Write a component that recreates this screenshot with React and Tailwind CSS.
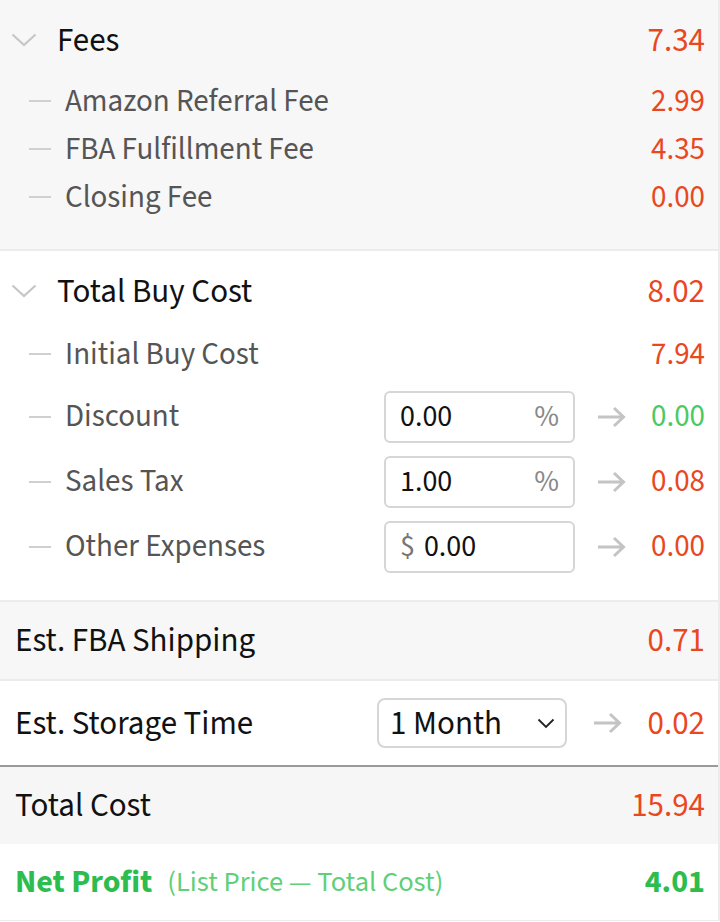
import React from 'react';

const RED = 'text-[#e9481f]';

function Chevron() {
  return (
    <svg width="26" height="14" viewBox="0 0 26 14" className="shrink-0">
      <polyline points="1.5,1.5 13,12 24.5,1.5" fill="none" stroke="#c6c6c6" strokeWidth="2.2" />
    </svg>
  );
}

function Arrow() {
  return (
    <svg width="29" height="22" viewBox="0 0 29 22" className="shrink-0">
      <path d="M1 11 H26 M17 2 L26.5 11 L17 20" fill="none" stroke="#c4c4c4" strokeWidth="3" />
    </svg>
  );
}

function Dash() {
  return <div className="w-[22px] h-[2px] bg-[#d0d0d0] shrink-0" />;
}

function SubRow({ label, value }) {
  return (
    <div className="flex items-center h-[48px] pl-[29px] pr-[13px] text-[31px]">
      <Dash />
      <span className="ml-[14px] flex-1 text-[#555]">{label}</span>
      <span className={RED}>{value}</span>
    </div>
  );
}

function Header({ label, value }) {
  return (
    <div className="flex items-center h-[56px] pl-[11px] pr-[13px] text-[33px]">
      <Chevron />
      <span className="ml-[20px] flex-1 text-[#111]">{label}</span>
      <span className={RED}>{value}</span>
    </div>
  );
}

function InputRow({ label, children, value, valueColor }) {
  return (
    <div className="flex items-center h-[65px] pl-[29px] pr-[13px] text-[31px]">
      <Dash />
      <span className="ml-[14px] flex-1 text-[#555]">{label}</span>
      <div className="w-[191px] h-[52px] border-2 border-[#d6d6d6] rounded-[6px] bg-white flex items-center px-[14px] text-[30px]">
        {children}
      </div>
      <div className="ml-[22px]"><Arrow /></div>
      <span className={`w-[79px] text-right ${valueColor}`}>{value}</span>
    </div>
  );
}

export default function App() {
  return (
    <div
      className="w-[720px] bg-white border-r-2 border-[#ececec] leading-none"
      style={{ fontFamily: '"Source Sans 3", "Source Sans Pro", Lato, sans-serif' }}
    >
      {/* Fees */}
      <div className="bg-[#f7f7f7] pt-[12px] pb-[28px] border-b-2 border-[#ececec]">
        <Header label="Fees" value="7.34" />
        <div className="mt-[9px]">
          <SubRow label="Amazon Referral Fee" value="2.99" />
          <SubRow label="FBA Fulfillment Fee" value="4.35" />
          <SubRow label="Closing Fee" value="0.00" />
        </div>
      </div>

      {/* Total Buy Cost */}
      <div className="bg-white pt-[12px] pb-[21px] border-b-2 border-[#ececec]">
        <Header label="Total Buy Cost" value="8.02" />
        <div className="mt-[11px]">
          <SubRow label="Initial Buy Cost" value="7.94" />
        </div>
        <div className="mt-[6px]">
          <InputRow label="Discount" value="0.00" valueColor="text-[#4cc965]">
            <span className="flex-1 text-[#111]">0.00</span>
            <span className="text-[#888]">%</span>
          </InputRow>
          <InputRow label="Sales Tax" value="0.08" valueColor={RED}>
            <span className="flex-1 text-[#111]">1.00</span>
            <span className="text-[#888]">%</span>
          </InputRow>
          <InputRow label="Other Expenses" value="0.00" valueColor={RED}>
            <span className="text-[#777] mr-[9px]">$</span>
            <span className="flex-1 text-[#111]">0.00</span>
          </InputRow>
        </div>
      </div>

      {/* Est. FBA Shipping */}
      <div className="bg-[#f7f7f7] h-[79px] flex items-center pl-[15px] pr-[13px] border-b-2 border-[#ececec] text-[33px]">
        <span className="flex-1 text-[#111]">Est. FBA Shipping</span>
        <span className={RED}>0.71</span>
      </div>

      {/* Est. Storage Time */}
      <div className="bg-white h-[86px] flex items-center pl-[15px] pr-[13px] border-b-2 border-[#9a9a9a] text-[33px]">
        <span className="flex-1 text-[#111]">Est. Storage Time</span>
        <div className="w-[190px] h-[50px] border-2 border-[#d6d6d6] rounded-[8px] bg-white flex items-center pl-[11px] pr-[10px] text-[33px]">
          <span className="flex-1 text-[#111]">1 Month</span>
          <svg width="18" height="11" viewBox="0 0 18 11">
            <polyline points="1.5,1.5 9,9 16.5,1.5" fill="none" stroke="#222" strokeWidth="1.8" />
          </svg>
        </div>
        <div className="ml-[26px]"><Arrow /></div>
        <span className={`w-[83px] text-right ${RED}`}>0.02</span>
      </div>

      {/* Total Cost */}
      <div className="bg-[#f6f6f6] h-[77px] flex items-center pl-[15px] pr-[13px] text-[33px]">
        <span className="flex-1 text-[#111]">Total Cost</span>
        <span className={RED}>15.94</span>
      </div>

      {/* Net Profit */}
      <div className="bg-white h-[77px] flex items-center pl-[15px] pr-[13px] border-b border-[#ececec] text-[32px]">
        <span className="font-bold text-[#2dbd4e]">Net Profit</span>
        <span className="ml-[15px] flex-1 text-[28.5px] text-[#5fcf78]">(List Price — Total Cost)</span>
        <span className="font-bold text-[#2dbd4e]">4.01</span>
      </div>
    </div>
  );
}
